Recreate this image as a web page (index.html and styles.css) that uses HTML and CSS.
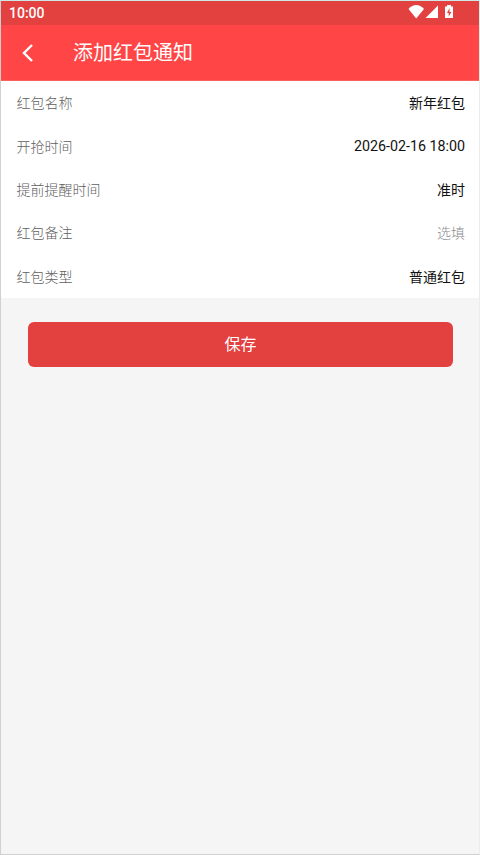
FILE: index.html
```html
<!DOCTYPE html>
<html lang="zh-CN">
<head>
<meta charset="utf-8">
<title>添加红包通知</title>
<link rel="stylesheet" href="styles.css">
</head>
<body>
<div class="screen">
  <div class="status">
    <span class="clock">10:00</span>
    <svg class="status-icons" width="48" height="16" viewBox="0 0 48 16" fill="#fff">
      <path d="M.5 5C5-.2 11.500-.2 16 5L8.200 14.500z"/>
      <path d="M30 1.500V14H17.500z"/>
      <path d="M39 1h4v1.500h2V14h-8V2.500h2z"/>
      <path d="M41.500 4l-2.500 5h1.700v3.500L43.500 8h-2z" fill="#e34040"/>
    </svg>
  </div>
  <header class="bar">
    <svg class="back" width="14" height="20" viewBox="0 0 14 20" fill="none" stroke="#fff" stroke-width="2.400"><path d="M11 2L3 10l8 8"/></svg>
    <h1 class="title">添加红包通知</h1>
  </header>
  <main>
    <div class="form">
      <div class="row"><span class="label">红包名称</span><span class="value">新年红包</span></div>
      <div class="row"><span class="label">开抢时间</span><span class="value date">2026-02-16 18:00</span></div>
      <div class="row"><span class="label">提前提醒时间</span><span class="value">准时</span></div>
      <div class="row"><span class="label">红包备注</span><span class="value hint">选填</span></div>
      <div class="row"><span class="label">红包类型</span><span class="value">普通红包</span></div>
    </div>
    <button class="save">保存</button>
  </main>
</div>
</body>
</html>
```
FILE: styles.css
```css
* { box-sizing: border-box; }
body {
  margin: 0;
  font-family: Roboto, "Noto Sans CJK SC", sans-serif;
}
.screen {
  height: 855px;
  overflow: hidden;
  background: #f5f5f5;
  border: 1px solid #d2cfd1;
  border-top-color: #cde6e6;
  border-right-color: #ececec;
}
.status {
  display: flex;
  align-items: center;
  justify-content: space-between;
  height: 24px;
  padding: 0 23px 0 8px;
  background: #e34040;
  color: #fff;
}
.clock {
  font-size: 14px;
  font-weight: 500;
}
.status-icons { margin-top: -2px; }
.bar {
  display: flex;
  align-items: center;
  height: 56px;
  padding-left: 20px;
  background: #ff4545;
  border-bottom: 1px solid #fa6060;
}
.title {
  margin: 0 0 0 38px;
  color: #fff;
  font-size: 20px;
  font-weight: 400;
  line-height: 30px;
}
.form { background: #fff; }
.row {
  display: flex;
  align-items: center;
  justify-content: space-between;
  height: 43.400px;
  padding: 0 14px 1px 15.500px;
  font-size: 14px;
}
.label { color: #606060; font-weight: 300; }
.value { color: #111; }
.date {
  padding-top: 1px;
  font-size: 14.250px;
}
.hint { color: #8c8c8c; font-weight: 300; }
.save {
  display: block;
  width: 425px;
  height: 45px;
  margin: 24px 0 0 27px;
  padding: 0;
  border: 0;
  border-radius: 6px;
  background: #e34040;
  color: #fff;
  font: 400 16px/46px Roboto, "Noto Sans CJK SC", sans-serif;
}
```
